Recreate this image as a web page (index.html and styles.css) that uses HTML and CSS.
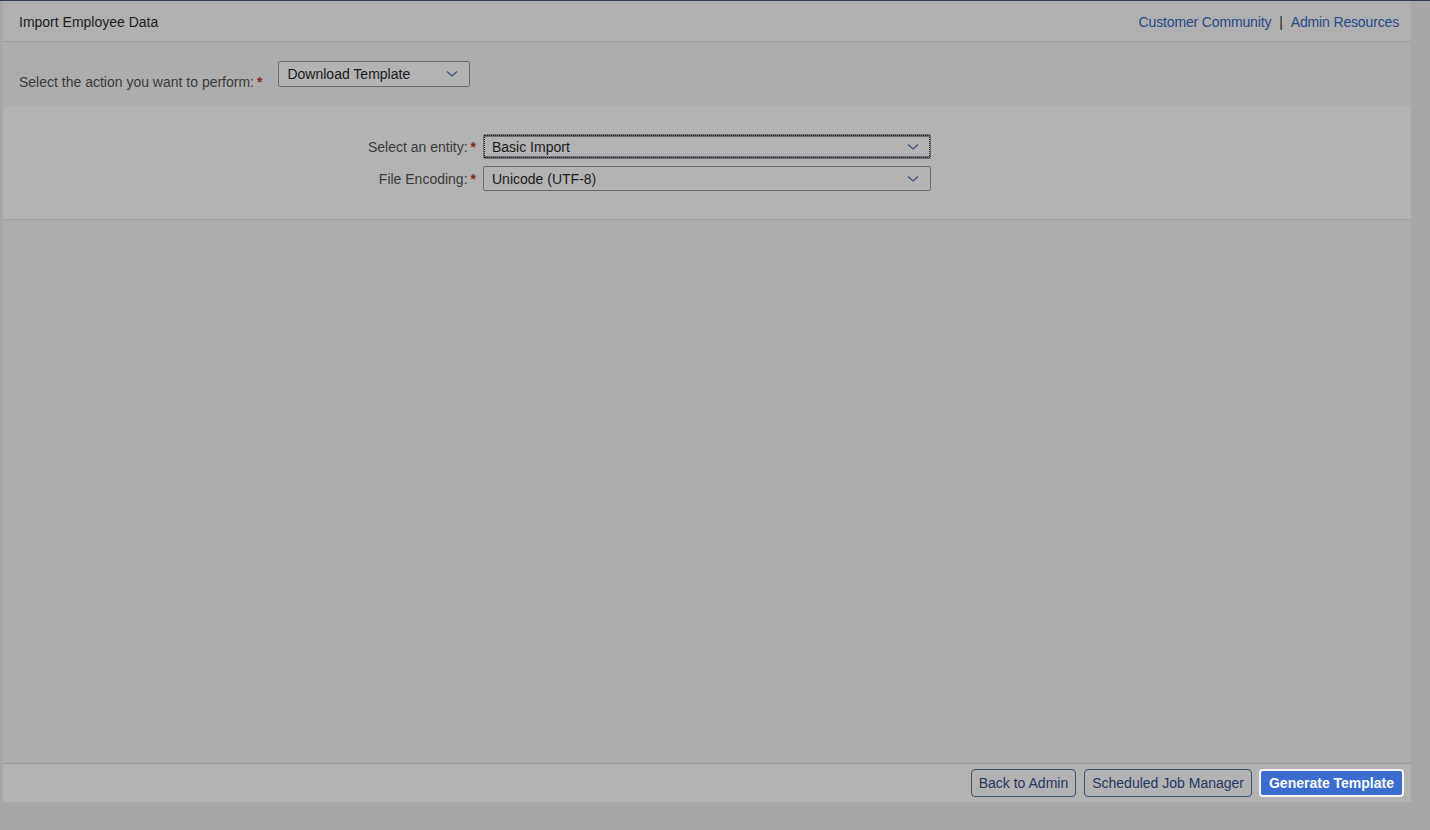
FILE: index.html
```html
<!DOCTYPE html>
<html lang="en">
<head>
    <meta charset="UTF-8">
    <title>Import Employee Data</title>
    <link rel="stylesheet" href="styles.css">
</head>
<body>

    <div class="page">
        <header class="header">
            <span class="title">Import Employee Data</span>
            <nav class="links">
                <a href="#">Customer Community</a>
                <span class="sep">|</span>
                <a href="#">Admin Resources</a>
            </nav>
        </header>

        <div class="action-row">
            <label class="action-label">Select the action you want to perform:<span class="req">*</span></label>
            <div class="dropdown action-select">
                <span>Download Template</span>
                <svg class="chev" width="12" height="8" viewBox="0 0 12 8"><path d="M1 1.5 L6 6 L11 1.5" fill="none" stroke="#34507e" stroke-width="1.2"/></svg>
            </div>
        </div>

        <div class="entity-section">
            <label class="field-label">Select an entity:<span class="req">*</span></label>
            <div class="dropdown wide focused">
                <span>Basic Import</span>
                <svg class="chev" width="12" height="8" viewBox="0 0 12 8"><path d="M1 1.5 L6 6 L11 1.5" fill="none" stroke="#34507e" stroke-width="1.2"/></svg>
            </div>
            <label class="field-label">File Encoding:<span class="req">*</span></label>
            <div class="dropdown wide">
                <span>Unicode (UTF-8)</span>
                <svg class="chev" width="12" height="8" viewBox="0 0 12 8"><path d="M1 1.5 L6 6 L11 1.5" fill="none" stroke="#34507e" stroke-width="1.2"/></svg>
            </div>
        </div>

        <div class="content"></div>

        <footer class="footer">
            <button class="btn">Back to Admin</button>
            <button class="btn">Scheduled Job Manager</button>
            <button class="btn primary">Generate Template</button>
        </footer>
    </div>

</body>
</html>
```

FILE: styles.css
```css
* {
    margin: 0;
    padding: 0;
    box-sizing: border-box;
    font-family: 'Liberation Sans', Arial, sans-serif;
}

body {
    background-color: #a7a7a7;
    border-top: 1px solid #2e3b4e;
    height: 830px;
    overflow: hidden;
}

.page {
    margin-left: 3px;
    width: 1408px;
    height: 801px;
    display: flex;
    flex-direction: column;
    background-color: #adadad;
}

.header {
    height: 41px;
    padding: 1px 12px 0 16px;
    display: flex;
    justify-content: space-between;
    align-items: center;
    background-color: #b0b0b0;
    border-bottom: 1px solid #9c9c9c;
}

.title {
    font-size: 14px;
    color: #1c1c1c;
}

.links {
    display: flex;
    align-items: center;
    gap: 8px;
    font-size: 14px;
    letter-spacing: -0.15px;
}

.links a {
    color: #24498a;
    text-decoration: none;
}

.links .sep {
    color: #222;
}

.action-row {
    height: 64px;
    padding: 19px 0 0 16px;
    display: flex;
    align-items: flex-start;
    gap: 15px;
}

.action-label {
    margin-top: 13px;
    font-size: 14px;
    color: #3a3a3a;
}

.req {
    color: #8a2424;
    font-weight: bold;
    margin-left: 3px;
}

.dropdown {
    height: 26px;
    border: 1px solid #686c72;
    border-radius: 2px;
    background-color: #b3b3b3;
    display: flex;
    align-items: center;
    justify-content: space-between;
    padding: 0 11px 0 8px;
    font-size: 14px;
    color: #1a1a1a;
}

.action-select {
    width: 192px;
    margin-left: 1px;
}

.entity-section {
    height: 114px;
    padding-top: 28px;
    background-color: #b3b3b3;
    border-bottom: 1px solid #a0a0a0;
    display: grid;
    grid-template-columns: 473px 448px;
    grid-auto-rows: 25px;
    column-gap: 7px;
    row-gap: 7px;
    align-items: center;
}

.field-label {
    text-align: right;
    font-size: 14px;
    color: #3a3a3a;
}

.dropdown.wide {
    height: 25px;
    width: 448px;
}

.dropdown.focused {
    border-top: 3px solid #6e7278;
    border-bottom: 3px solid #6e7278;
    outline: 1px dotted #222;
    outline-offset: -2px;
}

.content {
    flex: 1;
    background-color: #adadad;
}

.footer {
    height: 39px;
    border-top: 1px solid #969696;
    background-color: #b3b3b3;
    display: flex;
    justify-content: flex-end;
    align-items: flex-start;
    padding: 5px 7px 0 0;
    gap: 7px;
}

.btn {
    height: 28px;
    padding: 0 7px;
    border: 1px solid #3c4f70;
    border-radius: 4px;
    background: transparent;
    color: #1f3865;
    font-size: 14px;
    cursor: pointer;
}

.btn:first-child {
    margin-right: 1px;
}

.btn.primary {
    background-color: #3a6dcf;
    border: 2px solid #f4f4f4;
    color: #fff;
    font-weight: bold;
    padding: 0 8px;
}
```
